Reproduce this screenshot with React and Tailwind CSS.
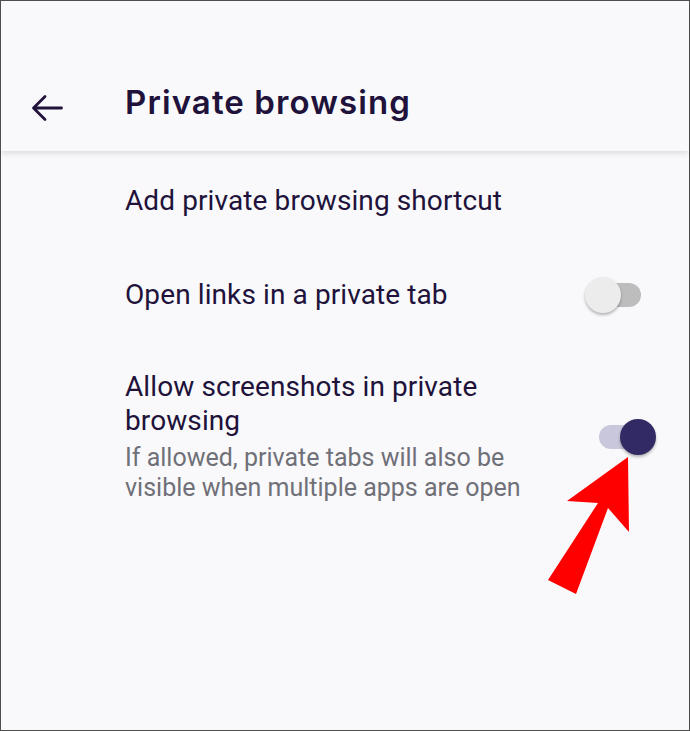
export default function App() {
  const Toggle = ({ on }) => (
    <div className="relative w-[71px] h-[36px] shrink-0">
      <div
        className={
          "absolute left-[14px] top-[6px] w-[42px] h-[24px] rounded-full " +
          (on ? "bg-[#c9c7dc]" : "bg-[#bdbdbd]")
        }
      />
      <div
        className={
          "absolute top-0 w-[36px] h-[36px] rounded-full shadow-[0_2px_3px_rgba(0,0,0,0.28)] " +
          (on ? "left-[35px] bg-[#312a65]" : "left-0 bg-[#ececec]")
        }
      />
    </div>
  );

  return (
    <div
      className="relative w-[690px] h-[731px] overflow-hidden border border-[#4d4d4d] bg-[#f9f9fb] text-[#20123a]"
      style={{ fontFamily: "Roboto, 'Noto Sans', sans-serif" }}
    >
      <header className="relative z-10 h-[150px] bg-[#f9f9fb] shadow-[0_2px_6px_rgba(0,0,0,0.13)] flex items-end pb-[29px]">
        <div className="w-[124px] flex items-center pl-[30px]">
          <svg width="32" height="28" viewBox="0 0 32 28" fill="none">
            <path
              d="M30.5 14H3M14 2.5L2.5 14L14 25.5"
              stroke="#20123a"
              strokeWidth="2.8"
              strokeLinecap="round"
              strokeLinejoin="round"
            />
          </svg>
        </div>
        <h1
          className="text-[33px] leading-[40px] font-semibold tracking-[1.1px] text-[#20123a]"
          style={{ fontFamily: "Inter, 'Open Sans', sans-serif" }}
        >
          Private browsing
        </h1>
      </header>

      <div className="pl-[124px] pr-[33px]">
        <div className="h-[97px] flex items-center pt-[2px]">
          <span className="text-[28px] leading-[34px] tracking-[0.1px]">Add private browsing shortcut</span>
        </div>
        <div className="h-[94px] flex items-center justify-between">
          <span className="text-[28px] leading-[34px] tracking-[0.1px]">Open links in a private tab</span>
          <Toggle on={false} />
        </div>
        <div className="flex items-center justify-between pt-[28px]">
          <div className="flex flex-col">
            <span className="text-[28px] leading-[34px] tracking-[0.1px]">
              Allow screenshots in private
              <br />
              browsing
            </span>
            <span className="mt-[5px] text-[25px] leading-[30px] text-[#707078]">
              If allowed, private tabs will also be
              <br />
              visible when multiple apps are open
            </span>
          </div>
          <Toggle on={true} />
        </div>
      </div>

      <svg
        className="absolute left-0 top-0 pointer-events-none"
        width="690"
        height="731"
        viewBox="0 0 690 731"
      >
        <polygon
          points="627,456 628,531 607,507 575,593 547,579 597,502 566,500"
          fill="#ff0000"
        />
      </svg>
    </div>
  );
}
